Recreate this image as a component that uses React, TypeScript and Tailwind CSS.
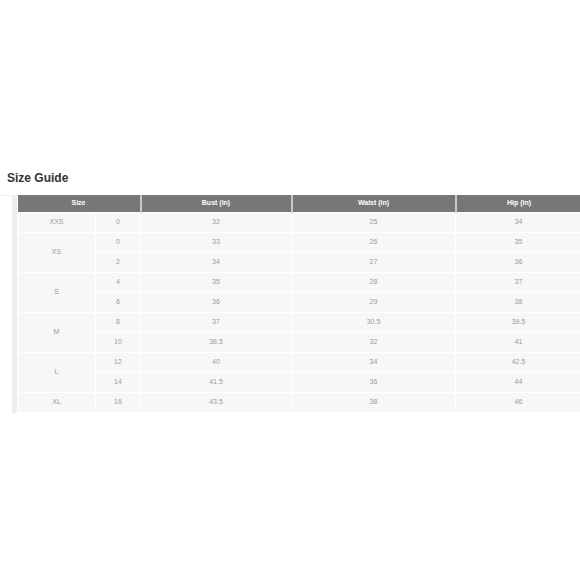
const rows: { size: string; span: number; items: [string, string, string, string][] }[] = [
  { size: "XXS", span: 1, items: [["0", "32", "25", "34"]] },
  { size: "XS", span: 2, items: [["0", "33", "26", "35"], ["2", "34", "27", "36"]] },
  { size: "S", span: 2, items: [["4", "35", "28", "37"], ["6", "36", "29", "38"]] },
  { size: "M", span: 2, items: [["8", "37", "30.5", "39.5"], ["10", "38.5", "32", "41"]] },
  { size: "L", span: 2, items: [["12", "40", "34", "42.5"], ["14", "41.5", "36", "44"]] },
  { size: "XL", span: 1, items: [["16", "43.5", "38", "46"]] },
]

export default function App() {
  return (
    <div className="w-[580px] h-[580px] overflow-hidden bg-white" style={{ fontFamily: '"Liberation Sans", Arial, sans-serif' }}>
      <h2 className="pt-[169px] pl-[7px] text-[12px] leading-[18px] font-bold text-[#333] mb-[8px]">Size Guide</h2>

      <div className="flex border-t border-[#eee]">
        <div className="w-[12px] shrink-0" />
        <div className="w-[5px] shrink-0 bg-[#eeeeee] -mt-px" />
        <div className="-mt-px">
          <table className="border-collapse table-fixed w-[564px] text-[7px] text-center">
            <colgroup>
              <col className="w-[78px]" />
              <col className="w-[45px]" />
              <col className="w-[151px]" />
              <col className="w-[164px]" />
              <col className="w-[126px]" />
            </colgroup>
            <thead>
              <tr className="h-[17px] bg-[#777] text-white font-bold">
                <th colSpan={2} className="p-0">Size</th>
                <th className="p-0 border-l-2 border-[#c8c8c8]">Bust (in)</th>
                <th className="p-0 border-l-2 border-[#c8c8c8]">Waist (in)</th>
                <th className="p-0 border-l-2 border-[#c8c8c8]">Hip (in)</th>
              </tr>
            </thead>
            <tbody className="text-[#9a9a9a]">
              {rows.map((g) =>
                g.items.map((r, i) => (
                  <tr key={g.size + i} className="h-[20px]">
                    {i === 0 && (
                      <td rowSpan={g.span} className="p-0 bg-[#f7f7f7] border border-white">
                        {g.size}
                      </td>
                    )}
                    {r.map((v, j) => (
                      <td key={j} className="p-0 bg-[#f7f7f7] border border-white">
                        {v}
                      </td>
                    ))}
                  </tr>
                ))
              )}
            </tbody>
          </table>
        </div>
      </div>
    </div>
  )
}
